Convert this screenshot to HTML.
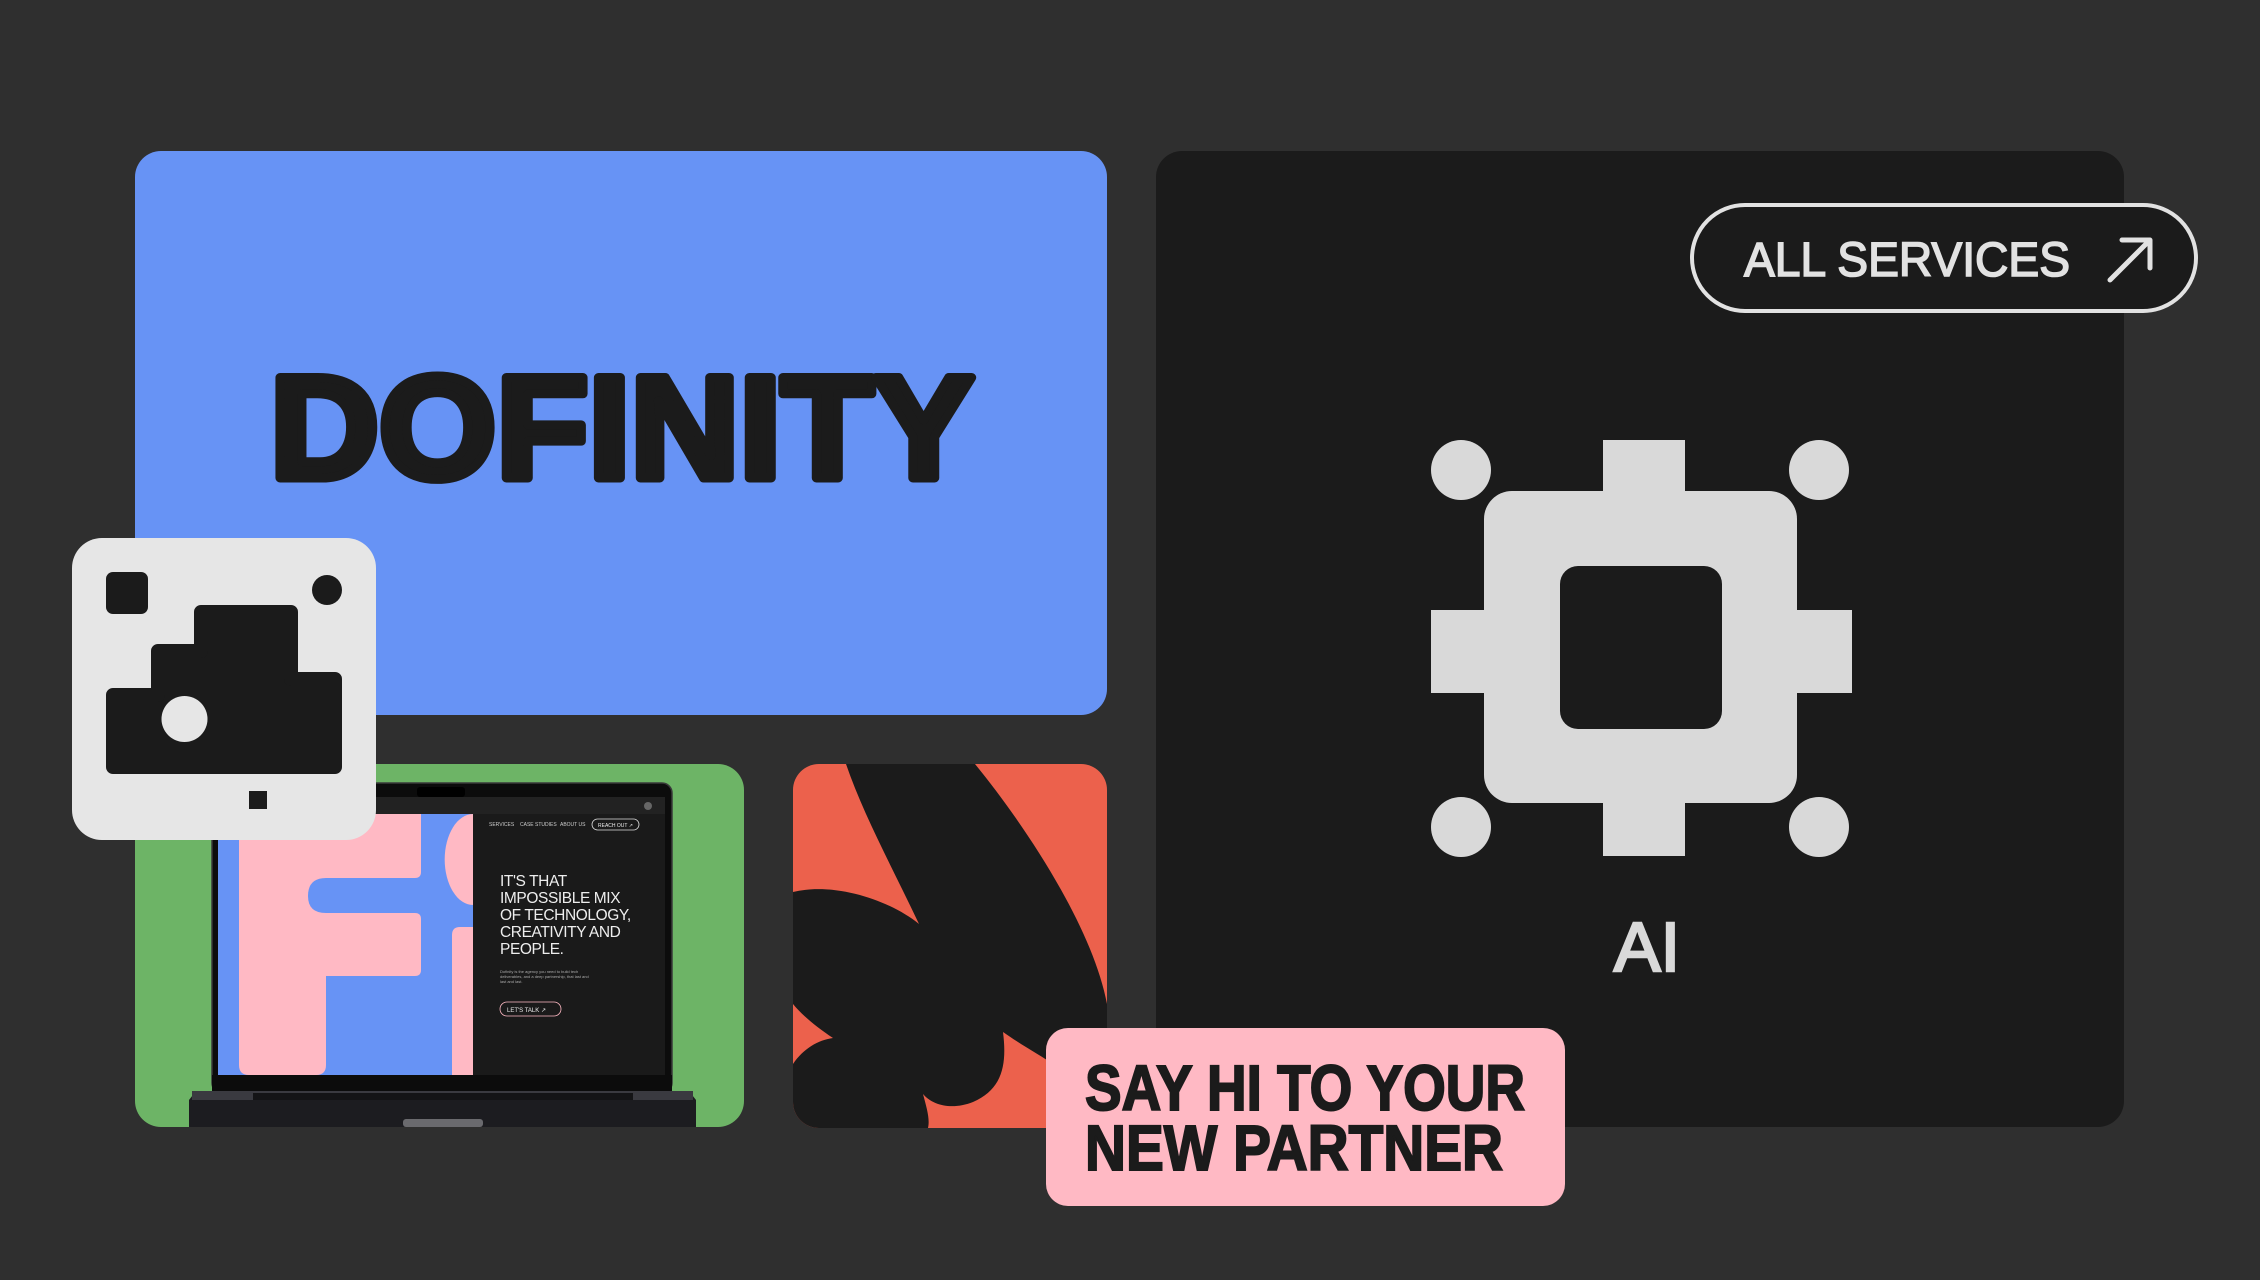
<!DOCTYPE html>
<html><head><meta charset="utf-8"><style>
html,body{margin:0;padding:0;background:#2f2f2f;}
svg{display:block}
</style></head><body>
<svg width="2260" height="1280" viewBox="0 0 2260 1280" xmlns="http://www.w3.org/2000/svg">
<rect width="2260" height="1280" fill="#2f2f2f"/>
<!-- blue card -->
<rect x="135" y="151" width="972" height="564" rx="26" fill="#6793f5"/>
<text x="270" y="478" font-family="Liberation Sans, sans-serif" font-weight="bold" font-size="146" fill="#1b1b1b" stroke="#1b1b1b" stroke-width="9" stroke-linejoin="round" textLength="704" lengthAdjust="spacingAndGlyphs">DOFINITY</text>
<!-- dark card -->
<rect x="1156" y="151" width="968" height="976" rx="26" fill="#1b1b1b"/>
<!-- all services pill -->
<rect x="1692" y="205" width="504" height="106" rx="53" fill="#1b1b1b" stroke="#e2e2e2" stroke-width="4"/>
<text x="1744" y="276" font-family="Liberation Sans, sans-serif" font-size="48" fill="#e2e2e2" stroke="#e2e2e2" stroke-width="1.6" textLength="326" lengthAdjust="spacingAndGlyphs">ALL SERVICES</text>
<path d="M2110 280 L2148 242 M2122 240 L2150 240 L2150 268" stroke="#e2e2e2" stroke-width="5" fill="none" stroke-linecap="round" stroke-linejoin="round"/>
<!-- AI chip -->
<g fill="#d9d9d9">
<rect x="1484" y="491" width="313" height="312" rx="28"/>
<rect x="1603" y="440" width="82" height="60"/>
<rect x="1603" y="795" width="82" height="61"/>
<rect x="1431" y="610" width="60" height="83"/>
<rect x="1790" y="610" width="62" height="83"/>
<circle cx="1461" cy="470" r="30"/><circle cx="1819" cy="470" r="30"/>
<circle cx="1461" cy="827" r="30"/><circle cx="1819" cy="827" r="30"/>
</g>
<rect x="1560" y="566" width="162" height="163" rx="18" fill="#1b1b1b"/>
<text x="1647" y="971" text-anchor="middle" font-family="Liberation Sans, sans-serif" font-size="70" fill="#d9d9d9" stroke="#d9d9d9" stroke-width="2.5">AI</text>
<!-- green card -->
<rect x="135" y="764" width="609" height="363" rx="26" fill="#6db466"/>
<!-- laptop -->
<rect x="212" y="783" width="460" height="310" rx="10" fill="#0c0c0c" stroke="#3a3a3a" stroke-width="1.5"/>
<rect x="218" y="797" width="447" height="17" fill="#222"/>
<rect x="417" y="787" width="48" height="10" rx="3" fill="#000"/>
<circle cx="648" cy="806" r="4" fill="#666"/>
<rect x="218" y="814" width="255" height="261" fill="#6793f5"/>
<g fill="#ffb9c4">
<path d="M239 814 H421 V872 Q421 878 415 878 H326 V1065 Q326 1075 316 1075 H249 Q239 1075 239 1065 Z"/>
<path d="M308 896 Q308 878 326 878 V913 Q308 913 308 896 Z" fill="#6793f5"/>
<path d="M326 913 H415 Q421 913 421 919 V970 Q421 976 415 976 H326 Z"/>
<path d="M473 814 V905 A28 45 0 0 1 473 814 Z"/>
<path d="M460 927 H473 V1075 H452 V935 Q452 927 460 927 Z"/>
</g>
<rect x="473" y="814" width="192" height="261" fill="#1a1a1a"/>
<g font-family="Liberation Sans, sans-serif" fill="#ccc">
<text x="489" y="826" font-size="5">SERVICES</text>
<text x="520" y="826" font-size="5">CASE STUDIES</text>
<text x="560" y="826" font-size="5">ABOUT US</text>
<rect x="592" y="819" width="47" height="11" rx="5.5" fill="none" stroke="#ddd" stroke-width="0.8"/>
<text x="598" y="827" font-size="5" fill="#eee">REACH OUT ↗</text>
<g fill="#eee" font-size="15.5" letter-spacing="-0.4">
<text x="500" y="886">IT'S THAT</text>
<text x="500" y="903">IMPOSSIBLE MIX</text>
<text x="500" y="920">OF TECHNOLOGY,</text>
<text x="500" y="937">CREATIVITY AND</text>
<text x="500" y="954">PEOPLE.</text>
</g>
<text x="500" y="973" font-size="4" fill="#aaa">Dofinity is the agency you need to build tech</text>
<text x="500" y="978" font-size="4" fill="#aaa">deliverables, and a deep partnership, that last and</text>
<text x="500" y="983" font-size="4" fill="#aaa">last and last.</text>
<rect x="500" y="1002" width="61" height="14" rx="7" fill="none" stroke="#ffb9c4" stroke-width="0.8"/>
<text x="507" y="1012" font-size="6" fill="#eee">LET'S TALK ↗</text>
</g>
<rect x="212" y="1075" width="460" height="18" fill="#0c0c0c"/>
<path d="M196 1091 H689 L696 1100 V1127 H189 V1100 Z" fill="#1c1c20"/>
<rect x="192" y="1091" width="501" height="9" fill="#3a3a40"/>
<rect x="253" y="1093" width="380" height="7" fill="#141416"/>
<rect x="403" y="1119" width="80" height="8" rx="3" fill="#6a6a6e"/>
<!-- icon card -->
<rect x="72" y="538" width="304" height="302" rx="30" fill="#e6e6e6"/>
<rect x="106" y="572" width="42" height="42" rx="7" fill="#1b1b1b"/>
<circle cx="327" cy="590" r="15" fill="#1b1b1b"/>
<path d="M113 695 H158 V651 H201 V612 H291 V679 H335 V767 H113 Z" fill="#1b1b1b" stroke="#1b1b1b" stroke-width="14" stroke-linejoin="round"/>
<circle cx="184.5" cy="719" r="23" fill="#e6e6e6"/>
<rect x="249" y="791" width="18" height="18" fill="#1b1b1b"/>
<!-- orange card -->
<clipPath id="oc"><rect x="793" y="764" width="314" height="364" rx="26"/></clipPath>
<g clip-path="url(#oc)">
<rect x="793" y="764" width="314" height="364" fill="#ec614c"/>
<g transform="translate(793,764)">
<path d="M53 0 L182 0 C235 65 300 165 314 240 L314 300 L265 303 C245 290 230 282 210 268 C214 300 210 325 180 338 C160 346 140 342 130 330 C134 345 137 355 135 364 L0 364 L0 300 C10 285 25 276 40 274 C22 262 8 250 0 240 L0 128 C40 118 95 135 126 160 C100 105 70 50 53 0 Z" fill="#1b1b1b"/>
</g>
</g>
<!-- pink label -->
<rect x="1046" y="1028" width="519" height="178" rx="22" fill="#ffb9c4"/>
<g font-family="Liberation Sans, sans-serif" font-weight="bold" font-size="64" fill="#1b1b1b" stroke="#1b1b1b" stroke-width="2">
<text x="1085" y="1110" textLength="440" lengthAdjust="spacingAndGlyphs">SAY HI TO YOUR</text>
<text x="1085" y="1170" textLength="418" lengthAdjust="spacingAndGlyphs">NEW PARTNER</text>
</g>
</svg>
</body></html>
